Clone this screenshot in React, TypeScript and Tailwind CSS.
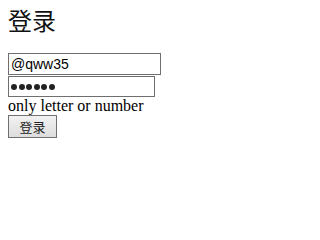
import React from "react";

export default function App() {
  return (
    <div className="w-[201px] h-[201px] bg-white pl-2 pt-[4px] flex flex-col items-start">
      <h1 className="text-[24px] leading-[32px] font-normal text-[#111] [font-family:'Noto_Sans_CJK_SC',sans-serif]">
        登录
      </h1>
      <div className="mt-[17px] flex flex-col gap-[1px]">
        <input
          readOnly
          value="@qww35"
          className="w-[153px] h-[22px] border border-[#6f6f6f] px-[2px] text-[14px] text-black bg-white outline-none [font-family:'Liberation_Sans',sans-serif]"
        />
        <div className="w-[147px] h-[21px] border border-[#6f6f6f] pl-[2px] bg-white flex items-center gap-[1.5px]">
          {[0, 1, 2, 3, 4, 5].map((i) => (
            <span key={i} className="block w-[6px] h-[6px] rounded-full bg-[#222]" />
          ))}
        </div>
      </div>
      <p className="text-[16px] leading-[18px] text-black [font-family:'Liberation_Serif',serif]">
        only letter or number
      </p>
      <button className="w-[49px] h-[23px] border border-[#707070] bg-gradient-to-b from-[#f2f2f2] to-[#dddddd] text-[13px] leading-none text-[#222] [font-family:'Noto_Sans_CJK_SC',sans-serif]">
        登录
      </button>
    </div>
  );
}
